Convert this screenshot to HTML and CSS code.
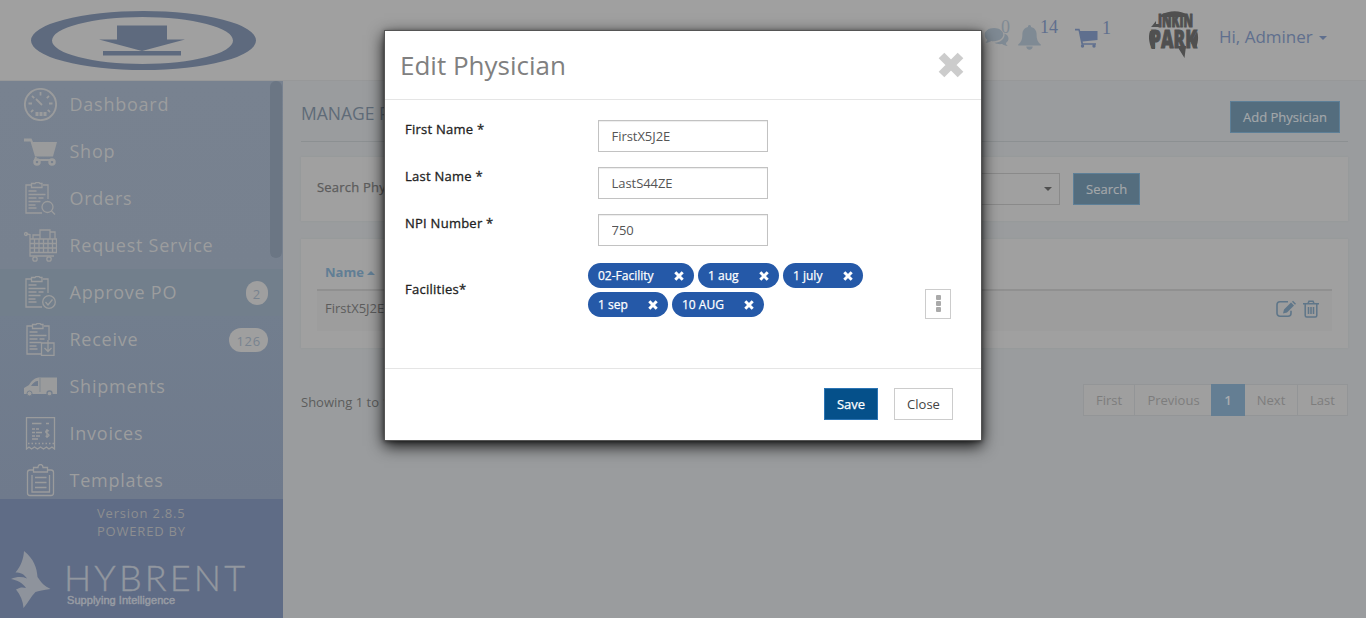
FILE: index.html
```html
<!DOCTYPE html>
<html lang="en">
<head>
<meta charset="utf-8">
<title>Manage Physicians</title>
<link rel="stylesheet" href="styles.css">
</head>
<body>
<svg width="0" height="0" class="defs">
  <symbol id="clip" viewBox="0 0 33 33"><path d="M8 3H3v28h16M25 17V3h-5M10 1.500h2l1-1h3l1 1h2v4H8.500v-4zM5.500 9h8M5.500 12.500h17M5.500 16h8M15.500 16h5M5.500 19.500h12M5.500 23h7M5.500 26h8"/></symbol>
</svg>
<header class="topbar">
  <svg class="brand" width="226" height="60" viewBox="0 0 226 60">
    <path fill="#5e6a7e" fill-rule="evenodd" d="M0 29.500a112.500 29.500 0 1 0 225 0a112.500 29.500 0 1 0-225 0zM21 29.500a90.500 23.500 0 1 1 181 0a90.500 23.500 0 1 1-181 0zM86 14.500h50v14h18L111 40 68 28.500h18zM72 40h78v4.500H72z"/>
  </svg>
  <div class="tools">
    <div class="tool chat">
      <svg width="25" height="21" viewBox="0 0 25 21" fill="#7f8a94"><path d="M10 1c5.200 0 9.300 2.900 9.300 6.600S15.200 14.200 10 14.200c-1 0-2-.1-2.800-.3C5.500 15 3.800 15.600 1.500 15.800c1-.9 1.700-1.800 1.900-3C1.500 11.600.7 9.700.7 7.600.7 3.900 4.800 1 10 1z"/><path d="M20.500 6.500c2.500 1 4 2.800 4 5 0 1.800-1 3.400-2.600 4.400.2 1.300.8 2.100 1.700 3-2 0-4-.8-5.500-1.900-2.700.4-5.500 0-7.500-1.300 5.900-.1 10.500-3.700 9.900-9.200z"/></svg><span>0</span>
    </div>
    <div class="tool bell">
      <svg width="23" height="25" viewBox="0 0 23 25" fill="#7f8a94"><path d="M11.500 0c1 0 1.700.8 1.500 1.900 3.800.8 5.600 3.800 5.600 7.200 0 5 .9 8 4.200 10.400v1H.2v-1C3.500 17.100 4.400 14 4.400 9.100c0-3.400 1.800-6.400 5.600-7.200C9.800.8 10.500 0 11.500 0zM8.300 21.500h6.400c0 1.900-1.400 3.200-3.200 3.200s-3.200-1.300-3.200-3.200z"/></svg><span>14</span>
    </div>
    <div class="tool cart">
      <svg width="23" height="20" viewBox="0 0 23 20" fill="#5f6f8e"><path d="M0 .8h4.500L5.200 3H22.500v9L7.600 13.500l.4 1.800h13v1.500H6.500L3.500 2.500H0z"/><circle cx="7.500" cy="18" r="1.700"/><circle cx="19" cy="18" r="1.700"/></svg><span>1</span>
    </div>
    <svg class="avatar" width="50" height="48" viewBox="0 0 50 48">
      <g fill="#505050" stroke="#505050">
        <path stroke="none" d="M3 15l4-5v3h3v3H2zM12 4C20-1 32-1 38 4v2H12zM28 35h9l-1.500 12zM1 20c-2 6-1 12 2 18h3V20zM48 20c2 6 1 12-1 17l-5-5z"/>
        <text x="9" y="16" font-size="17" textLength="35" lengthAdjust="spacingAndGlyphs">INKIN</text>
        <text x="1" y="36.500" font-size="25" textLength="47" lengthAdjust="spacingAndGlyphs">PARK</text>
      </g>
    </svg>
    <span class="hello">Hi, Adminer</span><i class="caret"></i>
  </div>
</header>

<div class="shell">
  <aside class="sidebar">
    <nav class="menu">
      <a class="item"><svg viewBox="0 0 33 33"><circle cx="16.500" cy="16.500" r="15.600" stroke-width="1.900"/><path stroke-width="1.800" d="M16.500 4v3.500M8 8l2.200 2.200M25 8l-2.200 2.200M4.500 15.500H8M25 15.500h3.500M7 24l2.300-2.200M26 24l-2.300-2.200M12 11l6 6"/><path stroke-width="3" d="M13 24v4M17 24v4M21 24v4"/></svg><span>Dashboard</span></a>
      <a class="item"><svg viewBox="0 0 33 33"><path fill="#9a9b9c" stroke="none" d="M0 3.500h7.500L9 7h24l-4 14.500H11L6.500 6.500H0z"/><path d="M12 22l-1 3h18" stroke-width="2"/><circle cx="13" cy="27" r="2.500" stroke-width="2.500"/><circle cx="28" cy="27" r="2.500" stroke-width="2.500"/></svg><span>Shop</span></a>
      <a class="item"><svg viewBox="0 0 33 33"><use href="#clip" x="-1"/><circle cx="23.500" cy="25" r="5.500"/><path d="M27.500 29l3.500 3.500"/></svg><span>Orders</span></a>
      <a class="item"><svg viewBox="0 0 33 33"><path d="M2 5l4 .5L6 27h24M6 10h26.500v13.500H6zM6 14.500h26M6 19h26M10.500 10v13M15 10v13M19.500 10v13M24 10v13M28.500 10v13M9 10V6h7v4M16 9V1h10v9M26 3h5v7"/><circle cx="2" cy="5" r="1.500"/><circle cx="11" cy="30" r="2.200"/><circle cx="25" cy="30" r="2.200"/></svg><span>Request Service</span></a>
      <a class="item current"><svg viewBox="0 0 33 33"><use href="#clip" x="-1"/><circle cx="25" cy="26" r="6.300" fill="#73808d"/><path d="M21.500 26l2.500 3 4.500-5.500"/></svg><span>Approve PO</span><b class="count">2</b></a>
      <a class="item"><svg viewBox="0 0 33 33"><use href="#clip"/><path fill="#737f8e" d="M17.500 20H30v12.500H17.500z"/><path d="M24 17v11M20.500 25l3.500 3.500 3.500-3.500"/></svg><span>Receive</span><b class="count">126</b></a>
      <a class="item"><svg viewBox="0 0 33 33"><path fill="#9a9b9c" stroke="none" fill-rule="evenodd" d="M16 7.500h17V24H0v-6l5-3c3-5 6-7.500 11-7.500zM14 11c-3 0-5 2-7 5h7z"/><path d="M16 8v14" stroke="#747f8e" stroke-width=".7"/><circle cx="5.500" cy="23.500" r="2.500" stroke="#747f8e" fill="#9a9b9c" stroke-width="1"/><circle cx="25.500" cy="23.500" r="2.500" stroke="#747f8e" fill="#9a9b9c"/></svg><span>Shipments</span></a>
      <a class="item"><svg viewBox="0 0 33 33"><path d="M2.500 32V.700h28V32l-2.500-2-3 2-2.500-2-3 2-3-2-3 2-3-2-3 2-2.500-2zM8 6.500h9.500M22 6.500h3M8 12h3M12 12h3M8 15.500h3M12 15.500h6M8 19h3M12 19h4M8 22h6"/><path stroke-dasharray="1.500 2" d="M4 26.500h26"/><path d="M25 14c-3-1.500-4.500 1-2 2.500 3.500 1 2 4-1.500 2.500M23 12v9"/></svg><span>Invoices</span></a>
      <a class="item"><svg viewBox="0 0 33 33"><path d="M9.500 6H6a2.500 2.500 0 0 0-2.500 2.500V29A2.500 2.500 0 0 0 6 31.500h21a2.500 2.500 0 0 0 2.500-2.500V8.500A2.500 2.500 0 0 0 27 6h-3.500M9.500 3.500H14c0-4 5-4 5 0h4.500V8h-14zM8 11v17h17.500V11M11 13.500h11.500M11 18.500h11.500M11 23.500h11.500"/></svg><span>Templates</span></a>
      <i class="scroll-thumb"></i>
    </nav>
    <footer class="powered">
      <div class="version">Version 2.8.5<br>POWERED BY</div>
      <svg class="hybrent" width="240" height="60" viewBox="0 0 240 60">
        <path fill="#8e939c" d="M13 0c10 8 13 17 13.500 26 4 6 7 9 13 12-7 1-12 2-15 3-5 5-7 10-12 16-.500-7-3-13-7.500-18.500 4-2.500 7-2.500 10-1.500C12 32 6 29 0 28c6-2.500 11-2.500 16-.500C13 23 9.500 21.500 4.500 21.500 10 15 12.500 8 13 0z"/>
        <text x="53" y="39.500" class="word" textLength="181">HYBRENT</text>
        <text x="56" y="53" class="motto" textLength="108">Supplying Intelligence</text>
      </svg>
    </footer>
  </aside>

  <main class="content">
    <div class="page-head"><h1>MANAGE PHYSICIANS</h1><button class="btn">Add Physician</button></div>
    <section class="panel search">
      <label>Search Physician</label>
      <div class="select"><i class="caret"></i></div>
      <button class="btn">Search</button>
    </section>
    <section class="panel list">
      <div class="thead">Name<i class="up"></i></div>
      <div class="row"><span>FirstX5J2E</span>
        <span class="actions">
          <svg width="20" height="18" viewBox="0 0 20 18"><path d="M12 1.800H4A3 3 0 0 0 1 4.800v8.400a3 3 0 0 0 3 3h8a3 3 0 0 0 3-3v-2.500" fill="none" stroke="#5f7689" stroke-width="1.600"/><path fill="#5f7689" d="M7 13.500l1-4 7-7 3 3-7 7zM16 1.700l1-1 3 3-1 1z"/></svg>
          <svg width="16" height="18" viewBox="0 0 16 18" fill="none" stroke="#5f7689" stroke-width="1.500"><path d="M0 3.700h16M5 3.500l1-2.300h4l1 2.300M2.200 4v11.500q0 1.500 1.500 1.500h8.600q1.500 0 1.500-1.500V4M5.500 7v7M8 7v7M10.500 7v7"/></svg>
        </span>
      </div>
    </section>
    <div class="pager-row"><span>Showing 1 to 1 of 1</span>
      <div class="pager"><a>First</a><a>Previous</a><a class="on">1</a><a>Next</a><a>Last</a></div>
    </div>
  </main>
</div>

<div class="modal">
  <div class="modal-head"><h2>Edit Physician</h2>
    <svg width="28" height="28" viewBox="0 0 28 28"><path d="M4.500 4.500l19 19M23.500 4.500l-19 19" stroke="#ccc" stroke-width="8"/></svg></div>
  <div class="modal-body">
    <div class="field"><label>First Name *</label><input value="FirstX5J2E"></div>
    <div class="field"><label>Last Name *</label><input value="LastS44ZE"></div>
    <div class="field"><label>NPI Number *</label><input value="750"></div>
    <div class="facilities"><label>Facilities*</label>
      <div class="chips">
        <span class="chip c1">02-Facility<svg viewBox="0 0 10 10"><path d="M1.300 1.300l7.400 7.400M8.700 1.300L1.300 8.700"/></svg></span>
        <span class="chip c2">1 aug<svg viewBox="0 0 10 10"><path d="M1.300 1.300l7.400 7.400M8.700 1.300L1.300 8.700"/></svg></span>
        <span class="chip c3">1 july<svg viewBox="0 0 10 10"><path d="M1.300 1.300l7.400 7.400M8.700 1.300L1.300 8.700"/></svg></span>
        <span class="chip c3">1 sep<svg viewBox="0 0 10 10"><path d="M1.300 1.300l7.400 7.400M8.700 1.300L1.300 8.700"/></svg></span>
        <span class="chip c4">10 AUG<svg viewBox="0 0 10 10"><path d="M1.300 1.300l7.400 7.400M8.700 1.300L1.300 8.700"/></svg></span>
      </div>
      <button class="more"><i></i><i></i><i></i></button>
    </div>
  </div>
  <div class="modal-foot"><button class="save">Save</button><button class="close">Close</button></div>
</div>
</body>
</html>
```
FILE: styles.css
```css
* { box-sizing: border-box; }
body { margin: 0; width: 1366px; height: 618px; overflow: hidden; background: #9a9c9e; font: 13px/18px "Open Sans", sans-serif; color: #5c5c5c; }
h1, h2 { margin: 0; font-weight: 400; }
button, input { font: inherit; border-radius: 0; margin: 0; }
.defs { position: absolute; }

.topbar { height: 81px; background: #a0a0a0; border-bottom: 1px solid #979899; display: flex; justify-content: space-between; align-items: flex-start; }
.brand { margin: 11px 0 0 31px; }
.tools { display: flex; align-items: flex-start; width: 382px; height: 80px; }
.tool { display: flex; align-items: flex-start; font: 18px/18px "Liberation Serif", serif; color: #5f6f8e; }
.chat { width: 34px; padding-top: 27px; }
.chat span { margin: -9px 0 0 -8px; color: #7f8a94; }
.bell { width: 57px; padding-top: 25px; }
.bell span { margin: -7px 0 0 -1px; }
.cart { width: 74px; padding-top: 28px; }
.cart span { margin: -9px 0 0 4px; }
.avatar { margin-top: 11px; font-family: "Open Sans", sans-serif; font-weight: 800; }
.hello { font-size: 17px; line-height: 24px; margin: 25px 6px 0 20px; color: #5f6f8e; white-space: nowrap; }
.caret { display: block; border: 4px solid transparent; border-top-color: #505050; border-bottom: 0; }
.tools .caret { margin-top: 36px; border-top-color: #5f6f8e; }

.shell { display: flex; height: 537px; }
.sidebar { width: 283px; display: flex; flex-direction: column; }
.menu { position: relative; height: 418px; overflow: hidden; background: linear-gradient(#788290, #77818f 45%, #727e8e 55%, #6f7a8c); }
.item { height: 47px; display: flex; align-items: center; padding: 0 15px 0 24px; font-size: 18px; letter-spacing: .75px; color: #9c9d9e; }
.item span { padding-bottom: 2px; }
.item svg { width: 33px; height: 33px; margin-right: 12.5px; fill: none; stroke: #9a9b9c; stroke-width: 1.3; }
.item.current { background: #727f8c; }
.count { margin-left: auto; height: 24px; border-radius: 12px; padding: 0 7px; background: #9f9f9f; color: #78838f; font-size: 13px; line-height: 26px; font-weight: 400; }
.scroll-thumb { position: absolute; left: 270px; top: 0; width: 12px; height: 177px; border-radius: 6px; background: #6b7684; }
.powered { height: 119px; background: #5f6c86; padding-top: 5px; }
.version { margin-left: 97px; letter-spacing: .8px; color: #8d8e90; }
.hybrent { display: block; margin: 11px 0 0 11px; }
.word { font: 300 36px Lato, sans-serif; fill: #92979f; stroke: #92979f; stroke-width: .4px; }
.motto { font: 11px "Liberation Sans", sans-serif; fill: #979ba3; stroke: #979ba3; stroke-width: .5px; }

.content { width: 1047px; margin-left: 18px; }
.page-head { height: 61px; border-bottom: 1px solid #8c9092; display: flex; justify-content: space-between; padding: 20px 8px 0 0; }
.page-head h1 { font-size: 17.5px; line-height: 24px; color: #5f6b78; }
.btn { height: 32px; padding: 0 12px; border: 1px solid #5d7f97; background: #546d7e; color: #a3a7aa; line-height: 30px; -webkit-text-stroke: .2px; }
.panel { background: #a0a0a0; box-shadow: 0 0 2px #939597; }
.search { height: 64px; margin-top: 15px; padding: 16px; display: flex; align-items: flex-start; }
.search label { width: 400px; line-height: 29px; letter-spacing: .2px; -webkit-text-stroke: .25px; }
.select { width: 343px; height: 32px; margin-right: 13px; border: 1px solid #8a8a8a; display: flex; justify-content: flex-end; align-items: center; padding-right: 7px; }
.list { height: 109px; margin-top: 18px; padding: 16px; }
.thead { height: 36px; padding: 8px; font-weight: 700; color: #617e95; border-bottom: 2px solid #909090; display: flex; }
.up { border: 4px solid transparent; border-bottom-color: #617e95; border-top: 0; height: 4px; margin: 8px 0 0 3px; }
.row { height: 40px; background: #9d9d9d; padding: 8px 13px 0 8px; display: flex; justify-content: space-between; }
.actions { display: flex; gap: 7px; padding-top: 1px; }
.pager-row { display: flex; justify-content: space-between; padding-top: 36px; }
.pager-row > span { line-height: 36px; }
.pager { display: flex; height: 32px; border: 1px solid #939597; background: #9f9f9f; color: #7d7d7d; line-height: 30px; }
.pager a { width: 51px; text-align: center; border-right: 1px solid #939597; }
.pager a:nth-child(2) { width: 76px; padding-left: 1px; border-right: 0; }
.pager .on { width: 34px; height: 32px; margin-top: -1px; line-height: 32px; background: #647e93; color: #a8abae; font-weight: 600; border: 0; }
.pager a:nth-child(4) { width: 53px; }
.pager a:last-child { width: 49px; border: 0; }

.modal { position: absolute; left: 384px; top: 30px; width: 598px; height: 411px; background: #fff; border: 1px solid #555; box-shadow: 0 5px 15px rgba(0, 0, 0, .9), 0 1px 4px rgba(0, 0, 0, .4); }
.modal-head { height: 69px; border-bottom: 1px solid #e5e5e5; display: flex; justify-content: space-between; padding: 17px 16px 0 15px; }
.modal-head h2 { font-size: 26px; line-height: 34px; color: #808080; }
.modal-head svg { margin-top: 3px; }
.modal-body { height: 269px; border-bottom: 1px solid #e5e5e5; padding: 20px 20px 0; }
.field { display: flex; height: 47px; }
.field label, .facilities label { width: 193px; letter-spacing: .25px; color: #222; -webkit-text-stroke: .3px; }
.field input { width: 170px; height: 32px; border: 1px solid #c2c2c2; padding: 0 12px 0 12.5px; box-shadow: inset 0 1px 1px rgba(0, 0, 0, .075); color: #555; outline: none; letter-spacing: -.05px; }
.facilities { display: flex; }
.facilities label { width: 183px; padding-top: 19px; }
.chips { display: flex; flex-wrap: wrap; gap: 4px; width: 337px; height: 54px; margin-top: 2px; padding-right: 50px; }
.chip { height: 25px; padding: 0 10px; border-radius: 12.5px; background: #2559a8; color: #fff; font-size: 12px; -webkit-text-stroke: .25px; display: flex; justify-content: space-between; align-items: center; }
.chip svg { width: 10px; height: 10px; stroke: #fff; stroke-width: 3; }
.c1 { width: 106px; }
.c2 { width: 81px; }
.c3 { width: 80px; }
.c4 { width: 92px; }
.more { width: 26px; height: 30px; margin-top: 28px; padding: 0 0 2px; border: 1px solid #ccc; background: #fff; display: flex; flex-direction: column; align-items: center; justify-content: center; gap: 1px; }
.more i { width: 5px; height: 5px; border-radius: 1px; background: #aaa; }
.modal-foot { display: flex; justify-content: flex-end; gap: 16px; padding: 19px 28px 0 0; }
.modal-foot button { height: 32px; line-height: 30px; padding: 0; text-align: center; }
.save { width: 54px; background: #05508a; border: 1px solid #2b74b4; color: #fff; -webkit-text-stroke: .25px; }
.close { width: 59px; background: #fff; border: 1px solid #ccc; color: #444; }
```
